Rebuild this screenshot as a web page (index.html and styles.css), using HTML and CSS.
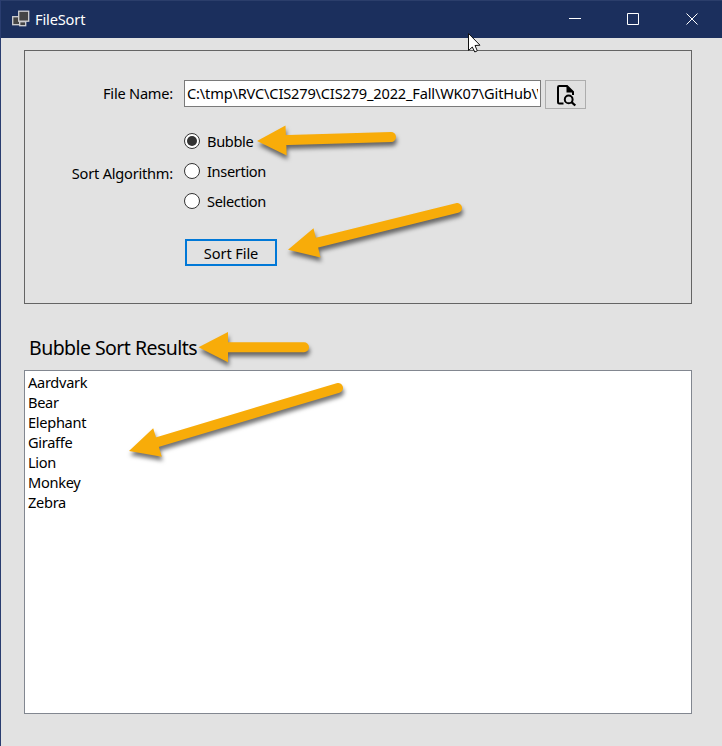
FILE: index.html
```html
<!DOCTYPE html>
<html lang="en">
<head>
<meta charset="utf-8">
<title>FileSort</title>
<link rel="stylesheet" href="styles.css">
</head>
<body>
<div class="window">
  <header class="titlebar">
    <svg class="app-icon" width="20" height="18" viewBox="0 0 20 18">
      <g fill="#454545" stroke="#d2d2d4" stroke-width="1.3">
        <rect x="2.7" y="6.7" width="7" height="8"/>
        <rect x="9.7" y="11.7" width="6" height="4"/>
        <rect x="8.7" y="1.2" width="10" height="10"/>
      </g>
    </svg>
    <h1 class="title">FileSort</h1>
    <div class="controls">
      <button class="control" aria-label="Minimize"><svg width="12" height="12"><path d="M0 5.5H12"/></svg></button>
      <button class="control" aria-label="Maximize"><svg width="12" height="12"><path d="M.5.5H11.5V11.5H.5Z"/></svg></button>
      <button class="control" aria-label="Close"><svg width="12" height="12"><path d="M.5.5L11.5 11.5M11.5.5L.5 11.5"/></svg></button>
    </div>
  </header>
  <main class="content">
    <section class="panel">
      <div class="label">File Name:</div>
      <div class="file-row">
        <div class="path"><span>C:\tmp\RVC\CIS279\CIS279_2022_Fall\WK07\GitHub\W</span></div>
        <button class="browse" aria-label="Browse">
          <svg width="22" height="24" viewBox="0 0 22 24">
            <path d="M8.5 20.5H4.2Q3 20.500 3 19.300V4.200Q3 3 4.200 3H12L18 9V12" fill="none" stroke="#000" stroke-width="2"/>
            <path d="M11.500 2.500V9.500H18.500Z"/>
            <circle cx="13.700" cy="16.400" r="3.900" fill="none" stroke="#000" stroke-width="2"/>
            <path d="M16.500 19.200L20.300 22.500" stroke="#000" stroke-width="2.300"/>
          </svg>
        </button>
      </div>
      <div class="label algorithm">Sort Algorithm:</div>
      <div class="radios">
        <div class="option"><i class="dot checked"></i><span>Bubble</span></div>
        <div class="option"><i class="dot"></i><span>Insertion</span></div>
        <div class="option"><i class="dot"></i><span>Selection</span></div>
      </div>
      <button class="sort"><span>Sort File</span></button>
    </section>
    <h2 class="heading">Bubble Sort Results</h2>
    <ul class="results">
      <li>Aardvark</li>
      <li>Bear</li>
      <li>Elephant</li>
      <li>Giraffe</li>
      <li>Lion</li>
      <li>Monkey</li>
      <li>Zebra</li>
    </ul>
  </main>
  <svg class="annotations" width="722" height="746" viewBox="0 0 722 746">
    <g class="arrows">
      <g><path class="shaft" d="M280 140.300L391 137"/><path d="M257 141L285.500 125.500L286.700 155.500Z"/></g>
      <g><path class="shaft" d="M312 243.800L457 208"/><path d="M288 249.700L313.500 228.300L320.500 257.500Z"/></g>
      <g><path class="shaft" d="M222 347.200L304 347.200"/><path d="M198.500 347.200L228 332V362.300Z"/></g>
      <g><path class="shaft" d="M152 443.700L338 388"/><path d="M129 451L153.200 428.300L161.800 456.700Z"/></g>
    </g>
    <path class="cursor" d="M468.500 33.500V50.500L472.300 47L474.800 52L477.300 50.800L475 45.500L480 45.200Z"/>
  </svg>
</div>
</body>
</html>
```
FILE: styles.css
```css
* { box-sizing: border-box; }
body {
  margin: 0;
  font-family: "Noto Sans", sans-serif;
  font-size: 14.6px;
  letter-spacing: -0.35px;
  color: #000;
}
button { font: inherit; letter-spacing: inherit; color: inherit; padding: 0; }
.window {
  position: relative;
  width: 722px;
  height: 746px;
  background: #e2e2e2;
  border-left: 1px solid #2a3d70;
  overflow: hidden;
}
.titlebar {
  display: flex;
  align-items: center;
  height: 38px;
  padding: 0 1px 0 9px;
  background: #1b2f5d;
  border-top: 1px solid #2b3e6b;
  color: #fff;
}
.title {
  margin: 0 0 2px 5px;
  font-size: 14.6px;
  font-weight: 400;
  line-height: 20px;
  letter-spacing: -0.15px;
}
.app-icon { display: block; margin-bottom: 1px; }
.controls { display: flex; margin: 0 0 1px auto; }
.control {
  display: flex;
  width: 58.5px;
  height: 36px;
  align-items: center;
  justify-content: center;
  background: none;
  border: 0;
}
.control path { fill: none; stroke: #fff; stroke-width: 1; }
.content { padding: 12px 30px 0 23px; }
.panel {
  display: grid;
  grid-template-columns: 148px 1fr;
  grid-template-rows: 29px 90px 27px;
  column-gap: 11px;
  row-gap: 17px;
  align-content: start;
  height: 254px;
  padding-top: 29px;
  border: 1px solid #646464;
}
.label { text-align: right; line-height: 27px; letter-spacing: -0.22px; white-space: nowrap; }
.algorithm { line-height: 95px; }
.file-row { display: flex; gap: 4px; }
.path {
  width: 357px;
  height: 27px;
  padding: 0 2px;
  line-height: 25px;
  letter-spacing: -0.17px;
  background: #fff;
  border: 1px solid #7a7a7a;
}
.path span { display: block; overflow: hidden; white-space: nowrap; }
.browse {
  display: flex;
  width: 41px;
  height: 29px;
  align-items: center;
  justify-content: center;
  background: #e1e1e1;
  border: 1px solid #adadad;
}
.option { display: flex; align-items: center; height: 30px; gap: 7px; }
.dot {
  display: grid;
  place-items: center;
  width: 16px;
  height: 16px;
  background: #fff;
  border: 1px solid #333;
  border-radius: 50%;
}
.checked::after { content: ""; width: 10px; height: 10px; border-radius: 50%; background: #333; }
.sort {
  grid-column: 2;
  width: 92px;
  height: 27px;
  margin: 6px 0 0 1px;
  line-height: 22px;
  letter-spacing: -0.1px;
  background: #e1e1e1;
  border: 2px solid #0078d7;
}
.heading {
  margin: 28px 0 0 5px;
  font-size: 19.5px;
  font-weight: 400;
  line-height: 32px;
  letter-spacing: -0.55px;
  white-space: nowrap;
}
.results {
  height: 344px;
  margin: 6px 0 0;
  padding: 1px 3px;
  background: #fff;
  border: 1px solid #828790;
  list-style: none;
  line-height: 20px;
  letter-spacing: -0.3px;
}
.annotations { position: absolute; top: 0; left: -1px; }
.arrows > g { fill: #f8ac09; filter: drop-shadow(1px 4px 2px rgba(0, 0, 0, .55)); }
.shaft { stroke: #f8ac09; stroke-width: 10; stroke-linecap: round; }
.cursor { fill: #fff; stroke: #111; stroke-width: 1; }
```
